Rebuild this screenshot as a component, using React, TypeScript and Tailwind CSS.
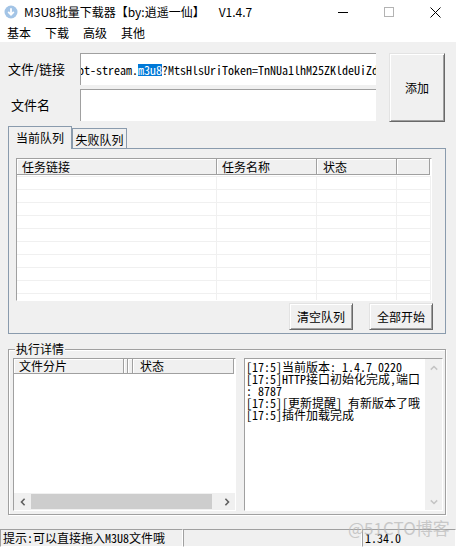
import React from "react";

const UI = "font-['Noto_Sans_CJK_SC','Noto_Sans',sans-serif]";
const SIM =
  "font-['Noto_Sans_Mono_CJK_SC','Liberation_Mono','Noto_Sans_CJK_SC',monospace]";
const BTN =
  "bg-[#f0f0f0] border border-t-[#e3e3e3] border-l-[#e3e3e3] border-r-[#696969] border-b-[#696969] shadow-[inset_1px_1px_0_#ffffff,inset_-1px_-1px_0_#a0a0a0] flex items-center justify-center text-[12px] text-black";
const HCELL =
  "h-full shrink-0 border-r border-b border-r-[#a0a0a0] border-b-[#a0a0a0] shadow-[inset_1px_1px_0_#ffffff] bg-[#f0f0f0] flex items-center overflow-hidden whitespace-nowrap text-[12px] leading-[12px]";
const SUNKEN =
  "border border-r-white border-b-white border-t-[#a0a0a0] border-l-[#a0a0a0]";

function TitleBar() {
  return (
    <div className="h-[24px] bg-white flex items-center shrink-0">
      <svg width="14" height="14" viewBox="0 0 14 14" className="ml-[4px]">
        <circle cx="7" cy="7" r="6.5" fill="#a3c4e6" />
        <path d="M7 3.2v6.2" stroke="#fff" strokeWidth="1.8" />
        <path d="M4.2 6.8L7 9.8l2.8-3" stroke="#fff" strokeWidth="1.8" fill="none" />
      </svg>
      <span className="ml-[6px] text-[12px] leading-[16px] whitespace-nowrap">
        M3U8批量下载器【by:逍遥一仙】
        <span className="ml-[14px]">V1.4.7</span>
      </span>
      <div className="ml-auto mr-[-2px] flex h-full">
        <div className="w-[46px] h-full flex items-center justify-center">
          <svg width="10" height="10" viewBox="0 0 10 10">
            <path d="M0 5.5h10" stroke="#000" strokeWidth="1" />
          </svg>
        </div>
        <div className="w-[46px] h-full flex items-center justify-center">
          <svg width="10" height="10" viewBox="0 0 10 10">
            <rect x="0.5" y="0.5" width="9" height="9" stroke="#b3b3b3" fill="none" />
          </svg>
        </div>
        <div className="w-[46px] h-full flex items-center justify-center">
          <svg width="11" height="11" viewBox="0 0 11 11">
            <path d="M0.5 0.5l10 10M10.5 0.5l-10 10" stroke="#000" strokeWidth="1" />
          </svg>
        </div>
      </div>
    </div>
  );
}

function MenuBar() {
  return (
    <div className="h-[18px] bg-white flex items-center shrink-0 text-[12px] leading-[14px]">
      {["基本", "下载", "高级", "其他"].map((m) => (
        <span key={m} className="px-[7px]">
          {m}
        </span>
      ))}
    </div>
  );
}

function QueueList() {
  const cols = [200, 100, 80, 34];
  const rows = Array.from({ length: 10 });
  return (
    <div className={`w-[416px] h-[143px] bg-white overflow-hidden flex flex-col ${SUNKEN}`}>
      <div className={`h-[16px] flex shrink-0 ${SIM}`}>
        <div className={`${HCELL} w-[200px] pl-[5px]`}>任务链接</div>
        <div className={`${HCELL} w-[100px] pl-[5px]`}>任务名称</div>
        <div className={`${HCELL} w-[80px] pl-[6px]`}>状态</div>
        <div className={`${HCELL} w-[33px]`}></div>
      </div>
      <div className="pt-[1px] flex flex-col">
        {rows.map((_, i) => (
          <div key={i} className="h-[13px] shrink-0 border-t border-[#f0f0f0] flex">
            {cols.map((w, j) => (
              <div
                key={j}
                style={{ width: w }}
                className="h-full shrink-0 border-r border-[#f0f0f0]"
              />
            ))}
          </div>
        ))}
      </div>
    </div>
  );
}

function PartList() {
  return (
    <div className={`w-[223px] h-[153px] bg-white flex flex-col shrink-0 ${SUNKEN}`}>
      <div className={`h-[15px] flex shrink-0 ${SIM}`}>
        <div className={`${HCELL} w-[110px] pl-[5px]`}>文件分片</div>
        <div className={`${HCELL} w-[4px]`}></div>
        <div className={`${HCELL} w-[5px]`}></div>
        <div className={`${HCELL} w-[101px] pl-[7px]`}>状态</div>
      </div>
      <div className="flex-1" />
      <div className="h-[17px] flex bg-[#f0f0f0] shrink-0">
        <div className="w-[17px] h-full flex items-center justify-center">
          <svg width="6" height="8" viewBox="0 0 6 8">
            <path d="M4.6 0.8L1.5 4l3.1 3.2" stroke="#606060" strokeWidth="1.6" fill="none" />
          </svg>
        </div>
        <div className="flex-1 h-full py-[1px]">
          <div className="w-[181px] h-full bg-[#cdcdcd]" />
        </div>
        <div className="w-[17px] h-full flex items-center justify-center">
          <svg width="6" height="8" viewBox="0 0 6 8">
            <path d="M1.4 0.8L4.5 4L1.4 7.2" stroke="#606060" strokeWidth="1.6" fill="none" />
          </svg>
        </div>
      </div>
    </div>
  );
}

function LogBox() {
  const lines = [
    "[17:5]当前版本: 1.4.7 0220",
    "[17:5]HTTP接口初始化完成,端口",
    ": 8787",
    "[17:5][更新提醒] 有新版本了哦",
    "[17:5]插件加载完成",
  ];
  return (
    <div className={`w-[199px] h-[153px] bg-white flex shrink-0 ${SUNKEN}`}>
      <div className={`flex-1 pl-[1px] pt-[2px] overflow-hidden text-[12px] leading-[12px] ${SIM}`}>
        {lines.map((l, i) => (
          <div key={i} className="whitespace-pre h-[12px]">
            {l}
          </div>
        ))}
      </div>
      <div className="w-[17px] h-full bg-[#f0f0f0] flex flex-col justify-between">
        <div className="h-[17px] flex items-center justify-center">
          <svg width="8" height="6" viewBox="0 0 8 6">
            <path d="M0.8 4.6L4 1.5l3.2 3.1" stroke="#c4c4c4" strokeWidth="1.5" fill="none" />
          </svg>
        </div>
        <div className="h-[17px] flex items-center justify-center">
          <svg width="8" height="6" viewBox="0 0 8 6">
            <path d="M0.8 1.4L4 4.5l3.2-3.1" stroke="#c4c4c4" strokeWidth="1.5" fill="none" />
          </svg>
        </div>
      </div>
    </div>
  );
}

export default function App() {
  return (
    <div className={`relative w-[456px] h-[547px] overflow-hidden bg-[#f0f0f0] text-black flex flex-col ${UI}`}>
      <TitleBar />
      <MenuBar />

      {/* input rows */}
      <div className="flex mt-[11px] shrink-0">
        <div className="w-[80px] flex flex-col gap-[4px]">
          <div className="h-[32px] flex items-center pl-[8px] text-[13px] whitespace-nowrap">文件/链接</div>
          <div className="h-[32px] flex items-center pl-[11px] text-[13px] whitespace-nowrap">文件名</div>
        </div>
        <div className="w-[296px] flex flex-col gap-[4px]">
          <div className={`h-[32px] bg-white border-t border-l border-[#a0a0a0] overflow-hidden flex items-center whitespace-nowrap text-[12px] leading-[12px] ${SIM}`}>
            <span className="ml-[-3px]">ot-stream.</span>
            <span className="bg-[#0078d7] text-white">m3u8</span>
            <span>?MtsHlsUriToken=TnNUa1lhM25ZKldeUiZd4</span>
          </div>
          <div className="h-[32px] bg-white border-t border-l border-[#a0a0a0]" />
        </div>
        <button className={`ml-[13px] w-[56px] h-[69px] ${BTN} ${SIM}`}>添加</button>
      </div>

      {/* tabs */}
      <div className="ml-[8px] mt-[4px] w-[438px] shrink-0">
        <div className="flex items-end h-[22px]">
          <div className="relative z-10 -mb-px h-[23px] w-[64px] border border-b-0 border-[#8a9bad] bg-[#f0f0f0] flex items-center justify-center text-[12px] leading-[14px]">
            当前队列
          </div>
          <div className="h-[20px] w-[55px] border border-b-0 border-[#8a9bad] bg-[#f0f0f0] flex items-center justify-center pt-[2px] text-[12px] leading-[14px]">
            失败队列
          </div>
        </div>
        <div className="h-[186px] border border-[#8a9bad] flex flex-col pl-[7px] pt-[9px]">
          <QueueList />
          <div className="flex justify-end gap-[16px] mt-[2px] pr-[12px]">
            <button className={`w-[64px] h-[27px] ${BTN} ${SIM}`}>清空队列</button>
            <button className={`w-[64px] h-[27px] ${BTN} ${SIM}`}>全部开始</button>
          </div>
        </div>
      </div>

      {/* group box */}
      <div className="relative ml-[8px] mt-[15px] w-[438px] h-[166px] shrink-0 border border-[#a0a0a0] shadow-[inset_1px_1px_0_#ffffff,1px_1px_0_#ffffff]">
        <span className="absolute left-[6px] top-[-9px] px-[1px] bg-[#f0f0f0] text-[12px] leading-[16px]">执行详情</span>
        <div className="flex pt-[8px] pl-[4px] gap-[8px]">
          <PartList />
          <LogBox />
        </div>
      </div>

      {/* status bar */}
      <div className={`mt-auto h-[18px] flex shrink-0 text-[12px] leading-[12px] ${SIM}`}>
        <div className={`w-[183px] h-full flex items-center pl-[2px] whitespace-nowrap ${SUNKEN}`}>
          提示:可以直接拖入M3U8文件哦
        </div>
        <div className={`w-[179px] h-full ${SUNKEN}`} />
        <div className={`flex-1 h-full flex items-center pl-[2px] ${SUNKEN}`}>1.34.0</div>
      </div>

      {/* watermark */}
      <div className="absolute left-[348px] top-[518px] text-[17px] leading-[20px] text-[#b8b8b8] opacity-70 whitespace-nowrap pointer-events-none">
        @51CTO博客
      </div>
    </div>
  );
}
